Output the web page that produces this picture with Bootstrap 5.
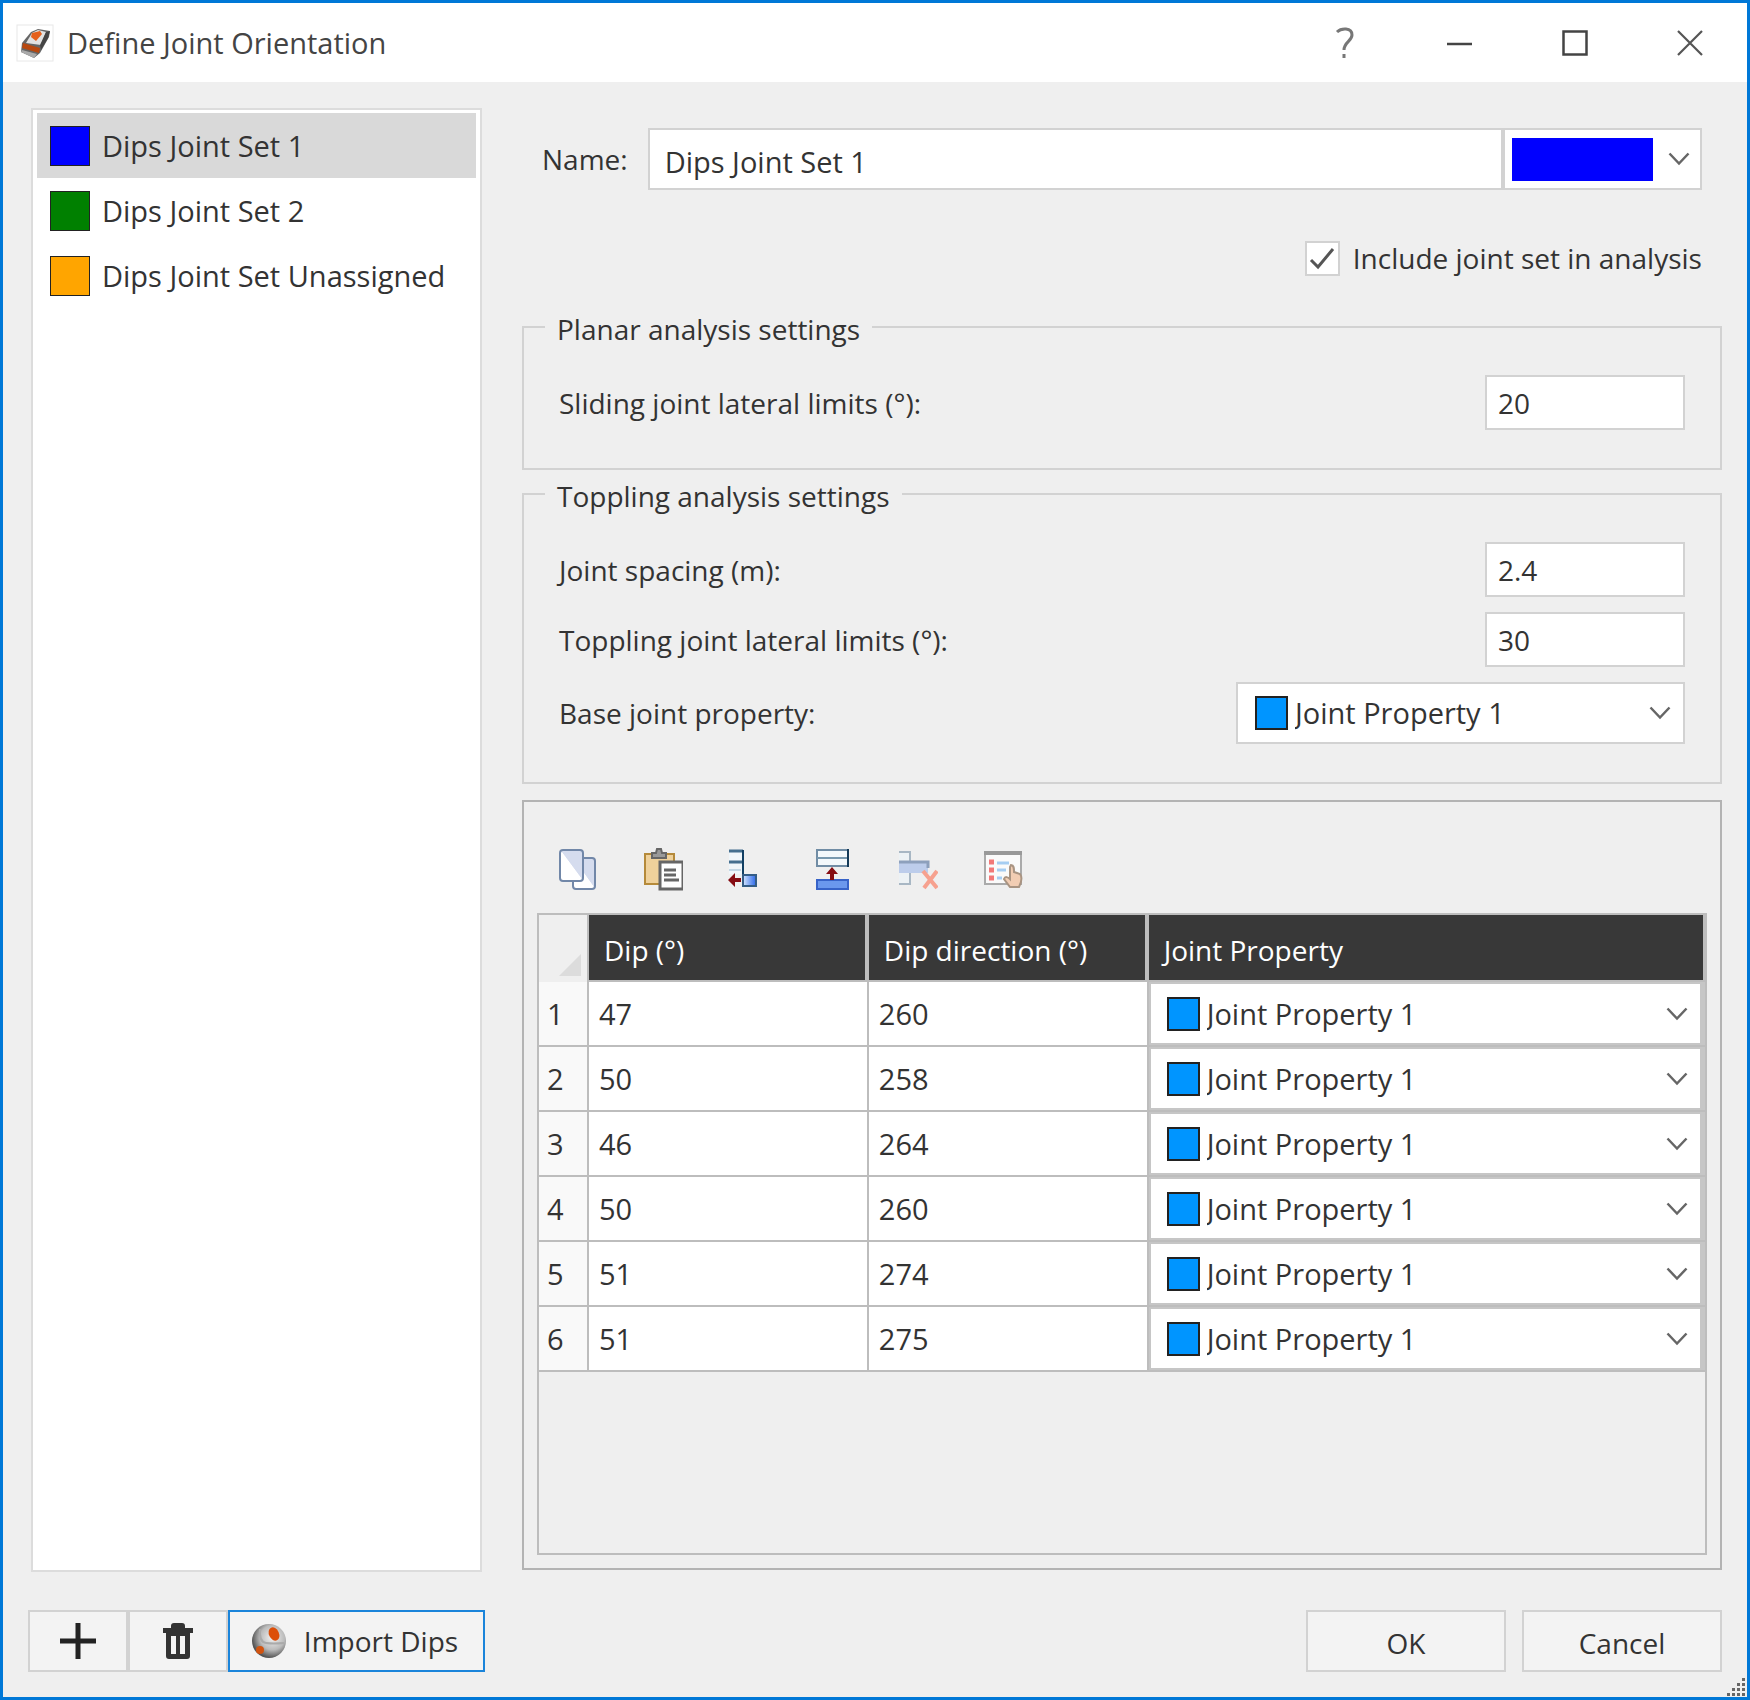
<!DOCTYPE html>
<html lang="en">
<head>
<meta charset="utf-8">
<meta name="viewport" content="width=device-width, initial-scale=1">
<title>Define Joint Orientation</title>
<link href="https://cdn.jsdelivr.net/npm/bootstrap@5.3.0/dist/css/bootstrap.min.css" rel="stylesheet">
<style>
  body { font-family: "Open Sans", "Noto Sans", sans-serif; font-size: 28px; line-height: 40px; color: #333; background: #efefef; }
  .dialog-window { min-height: 100vh; border: 3px solid #0078d7; }
  .title-bar { height: 79px; padding-left: 13px; }
  .title-text { margin-left: 13px; color: #444; font-size: 29px; line-height: 40px; font-weight: 400; }
  .caption-btn { width: 115px; height: 75px; border: 0; background: none; padding: 0; }
  .caption-btn svg, .tool-btn svg { display: block; margin: 0 auto; }
  .dialog-body { padding: 26px 25px 0; gap: 37px; }
  .set-column { flex: 0 0 457px; }
  .set-list { margin: 0 3px; border: 2px solid #dcdcdc; background: #fff; padding: 3px 4px; }
  .set-item { height: 65px; padding: 0 13px; gap: 12px; color: #333; font-size: 29px; border: 0; background: none; text-align: left; }
  .set-item.chosen { background: #d9d9d9; }
  .set-swatch { width: 40px; height: 40px; border: 1px solid #222; flex: none; }
  .swatch-blue { background: #00f; }
  .swatch-green { background: #008000; }
  .swatch-orange { background: #ffa500; }
  .main-column { min-width: 0; padding-bottom: 2px; }
  .name-row { padding: 20px 20px 0; }
  .name-row label { margin-right: 20px; }
  .field-box, .combo-box { border: 2px solid #d2d2d2; background-color: #fff; border-radius: 0; color: #333; font-size: 28px; line-height: 40px; }
  .field-box { height: 55px; width: 200px; padding: 0 11px; }
  .name-box { height: 62px; padding: 4px 15px 0; width: auto; min-width: 0; font-size: 29px; }
  .combo-box { height: 62px; display: flex; align-items: center; }
  .combo-box select { border: 0; border-radius: 0; background-color: transparent; color: #333; font-size: 29px; line-height: 40px; height: 56px; padding: 0 40px 0 7px;
    background-image: url("data:image/svg+xml,%3Csvg xmlns='http://www.w3.org/2000/svg' viewBox='0 0 22 14'%3E%3Cpath d='M1.500 1.500 11 11.500 20.500 1.500' fill='none' stroke='%23666' stroke-width='2.500'/%3E%3C/svg%3E");
    background-size: 22px 14px; background-position: right 12px center; }
  .color-box { width: 199px; padding-left: 7px; }
  .color-box select { background-position: right 10px center; }
  .color-fill { width: 141px; height: 43px; background: #00f; flex: none; }
  .base-box { width: 449px; padding-left: 17px; }
  .prop-swatch { width: 33px; height: 34px; border: 2px solid #222; background: #0095ff; flex: none; }
  .include-row { padding: 48px 20px 0; gap: 13px; }
  .include-row .form-check-input { width: 35px; height: 35px; margin: 0; border: 2px solid #d2d2d2; border-radius: 0; background-color: #fff; float: none; }
  .include-row .form-check-input:checked { background-size: 30px 30px; background-image: url("data:image/svg+xml,%3Csvg xmlns='http://www.w3.org/2000/svg' viewBox='0 0 30 30'%3E%3Cpath d='M4 17 11 24 26 6' fill='none' stroke='%23555' stroke-width='3'/%3E%3C/svg%3E"); }
  .group-frame { border: 2px solid #d2d2d2; padding: 0 35px 38px; margin: 0; }
  .group-frame legend { float: none; width: auto; margin: 0 0 26px -14px; padding: 4px 12px 0; font-size: 28px; line-height: 40px; }
  .group-planar { margin-top: 27px; }
  .group-toppling { margin-top: 2px; }
  .set-rows { gap: 15px; }
  .grid-panel { margin-top: 16px; border: 2px solid #b3b3b3; padding: 45px 13px 13px; }
  .tool-row { padding: 0 21px 20px; gap: 45px; }
  .tool-btn { width: 40px; height: 46px; padding: 0; border: 0; background: none; }
  .grid-frame { border: 2px solid #bdbdbd; }
  .joint-grid { width: 100%; table-layout: fixed; border-collapse: separate; border-spacing: 0; font-size: 29px; }
  .col-num { width: 50px; }
  .col-dip { width: 24%; }
  .joint-grid thead th { height: 67px; background: #383838; color: #fff; font-size: 28px; font-weight: 400; padding: 4px 15px 0; border-right: 4px solid #bdbdbd; border-bottom: 2px solid #bdbdbd; }
  .joint-grid thead th:last-child { border-right-width: 2px; }
  .joint-grid thead th.corner { background: #efefef; border-right-width: 2px; border-bottom: 0; padding: 0 6px 6px 0; vertical-align: bottom; }
  .corner svg { display: block; margin-left: auto; }
  .joint-grid tbody td, .joint-grid tbody th { height: 65px; background: #fff; padding: 0 10px; border-right: 2px solid #bdbdbd; border-bottom: 2px solid #bdbdbd; font-weight: 400; }
  .joint-grid tbody th { background: #f9f9f9; padding: 0 8px; }
  .joint-grid tbody td.prop-cell { padding: 0; border-right: 0; }
  .prop-cell .combo-box { height: 63px; border-color: #c6c6c6; border-right-width: 5px; padding-left: 16px; }
  .foot-row { padding: 38px 25px 25px; gap: 16px; }
  .dlg-btn { height: 62px; width: 200px; border: 2px solid #d2d2d2; border-radius: 0; background: #f3f3f3; color: #333; font-size: 28px; line-height: 40px; padding: 4px 0 0; }
  .icon-btn { width: 100px; padding: 0; }
  .import-btn { width: 257px; border: 2px solid #1a84da; padding: 0 4px 0 0; gap: 17px; }
  .size-grip { position: absolute; right: 1px; bottom: 1px; }
</style>
</head>
<body>
<div class="dialog-window d-flex flex-column position-relative">
  <header class="title-bar d-flex align-items-center bg-white">
    <svg width="38" height="38" viewBox="0 0 38 38" aria-hidden="true"><rect x="1" y="1" width="36" height="36" fill="#fff" stroke="#e8e8e8"/><path d="M5 28 6 19 15 8 22 5 34 7 33 13 24 29 18 34Z" fill="#666"/><path d="M10 19 16 9 22 6 30 8 25 21Z" fill="#e2e2e2"/><path d="M30 8 34 7 32 14 25 26 24 21Z" fill="#444"/><path d="M16 9 24 7 26 10 20 17 15 13Z" fill="#e5601c"/><path d="M7 19 24 24 23 29 6 24Z" fill="#b8480f"/><path d="M6 26 21 30 18 34 5 28Z" fill="#aaa"/></svg>
    <h1 class="title-text mb-0 me-auto">Define Joint Orientation</h1>
    <button class="caption-btn" type="button" aria-label="Help"><svg width="20" height="32" viewBox="0 0 20 32"><path d="M2 5C6 1 17 0 17 8 17 14 9 15 9 23M9 27V31" fill="none" stroke="#777" stroke-width="3"/></svg></button>
    <button class="caption-btn" type="button" aria-label="Minimize"><svg width="26" height="26" viewBox="0 0 26 26"><path d="M0 14H25" stroke="#444" stroke-width="2.500"/></svg></button>
    <button class="caption-btn" type="button" aria-label="Maximize"><svg width="26" height="26" viewBox="0 0 26 26"><rect x="1.500" y="1.500" width="23" height="23" fill="none" stroke="#444" stroke-width="2.500"/></svg></button>
    <button class="caption-btn" type="button" aria-label="Close"><svg width="26" height="26" viewBox="0 0 26 26"><path d="M1 1 25 25M25 1 1 25" stroke="#555" stroke-width="2.200"/></svg></button>
  </header>
  <main class="dialog-body d-flex flex-grow-1">
    <div class="set-column d-flex flex-column">
      <div class="set-list flex-grow-1 d-flex flex-column">
        <button type="button" class="set-item chosen d-flex align-items-center"><span class="set-swatch swatch-blue"></span>Dips Joint Set 1</button>
        <button type="button" class="set-item d-flex align-items-center"><span class="set-swatch swatch-green"></span>Dips Joint Set 2</button>
        <button type="button" class="set-item d-flex align-items-center"><span class="set-swatch swatch-orange"></span>Dips Joint Set Unassigned</button>
      </div>
    </div>
    <div class="main-column flex-grow-1 d-flex flex-column">
      <div class="name-row d-flex align-items-center">
        <label for="setName">Name:</label>
        <input id="setName" type="text" class="field-box name-box flex-grow-1" value="Dips Joint Set 1">
        <div class="combo-box color-box"><span class="color-fill"></span><select class="form-select" aria-label="Colour"><option value="#0000ff"></option></select></div>
      </div>
      <div class="include-row d-flex align-items-center justify-content-end">
        <input id="include" type="checkbox" class="form-check-input" checked><label for="include">Include joint set in analysis</label>
      </div>
      <fieldset class="group-frame group-planar">
        <legend>Planar analysis settings</legend>
        <div class="d-flex justify-content-between align-items-center"><label for="slide">Sliding joint lateral limits (°):</label><input id="slide" class="field-box" type="text" value="20"></div>
      </fieldset>
      <fieldset class="group-frame group-toppling">
        <legend>Toppling analysis settings</legend>
        <div class="d-flex flex-column set-rows">
          <div class="d-flex justify-content-between align-items-center"><label for="spacing">Joint spacing (m):</label><input id="spacing" class="field-box" type="text" value="2.4"></div>
          <div class="d-flex justify-content-between align-items-center"><label for="topple">Toppling joint lateral limits (°):</label><input id="topple" class="field-box" type="text" value="30"></div>
          <div class="d-flex justify-content-between align-items-center"><label for="baseProp">Base joint property:</label><div class="combo-box base-box"><span class="prop-swatch"></span><select id="baseProp" class="form-select"><option>Joint Property 1</option></select></div></div>
        </div>
      </fieldset>
      <section class="grid-panel flex-grow-1 d-flex flex-column">
        <div class="tool-row d-flex">
          <button class="tool-btn" type="button" aria-label="Copy"><svg width="40" height="44" viewBox="0 0 40 44"><defs><linearGradient id="pg" x1="0" y1="1" x2="1" y2="0"><stop offset=".5" stop-color="#fff"/><stop offset=".52" stop-color="#d5dcee"/></linearGradient></defs><rect x="15" y="10" width="22" height="31" rx="3" fill="url(#pg)" stroke="#7187a8" stroke-width="2"/><rect x="2" y="2" width="23" height="31" rx="3" fill="url(#pg)" stroke="#7187a8" stroke-width="2"/></svg></button>
          <button class="tool-btn" type="button" aria-label="Paste"><svg width="40" height="44" viewBox="0 0 40 44"><rect x="2" y="6" width="29" height="30" fill="#efd19b" stroke="#b58a3a" stroke-width="2"/><path d="M9 10V5H13L14 1H18L19 5H23V10Z" fill="#999" stroke="#666" stroke-width="2"/><rect x="17" y="14" width="23" height="27" fill="#fff" stroke="#666" stroke-width="3"/><path d="M21 22H33M21 27H33M21 32H36" stroke="#666" stroke-width="3"/></svg></button>
          <button class="tool-btn" type="button" aria-label="Insert row"><svg width="40" height="44" viewBox="0 0 40 44"><defs><linearGradient id="bl"><stop offset="0" stop-color="#d5e6ff"/><stop offset="1" stop-color="#2c68e8"/></linearGradient></defs><path d="M1 3H15V26H1Z" fill="#f0f6fa"/><path d="M1 3H15M1 14H15" stroke="#456f8f" stroke-width="3"/><path d="M15 2V26" stroke="#123f63" stroke-width="2"/><path d="M1 22H13" stroke="#c3d7e5" stroke-width="2"/><rect x="15" y="27" width="13" height="11" fill="url(#bl)" stroke="#345d86" stroke-width="2"/><path d="M0 32 7 25V30H13V34H7V39Z" fill="#850c12"/></svg></button>
          <button class="tool-btn" type="button" aria-label="Append row"><svg width="40" height="44" viewBox="0 0 40 44"><rect x="4" y="2" width="31" height="16" fill="#f3f8fb" stroke="#718da5" stroke-width="2"/><path d="M4 10H35" stroke="#7898ae" stroke-width="2"/><path d="M35 1V19" stroke="#143a58" stroke-width="2"/><rect x="4" y="32" width="31" height="9" fill="#6b98ed" stroke="#3763c8" stroke-width="2"/><path d="M19 19 25 26H21V32H17V26H13Z" fill="#850c12"/></svg></button>
          <button class="tool-btn" type="button" aria-label="Delete row"><svg width="40" height="44" viewBox="0 0 40 44"><path d="M1 3H12V36H1Z" fill="#edf2f5"/><path d="M1 4H12V36H1" fill="none" stroke="#a8b7c4" stroke-width="2"/><path d="M1 14H30V25H1Z" fill="#bdcdeb"/><path d="M1 14H30V20" fill="none" stroke="#8da0bc" stroke-width="3"/><path d="M25 23 39 40M39 23 26 40" stroke="#f6a18f" stroke-width="4"/></svg></button>
          <button class="tool-btn" type="button" aria-label="Options"><svg width="40" height="44" viewBox="0 0 40 44"><rect x="2" y="4" width="36" height="32" fill="#fafafa" stroke="#aaa" stroke-width="2"/><path d="M1 5H39" stroke="#999" stroke-width="4"/><path d="M6 14H11M6 22H11M6 30H11" stroke="#f27878" stroke-width="5"/><path d="M14 15H26M14 22H23M14 30H19" stroke="#a5cdf2" stroke-width="3"/><path d="M28 17C31 17 31 20 31 24L37 26C40 30 38 35 36 39H27L21 31C22 28 25 29 27 31V19Z" fill="#f2cdb3" stroke="#a99482" stroke-width="2"/></svg></button>
        </div>
        <div class="grid-frame flex-grow-1">
          <table class="joint-grid">
            <colgroup><col class="col-num"><col class="col-dip"><col class="col-dip"><col></colgroup>
            <thead><tr><th class="corner" aria-label="Select all"><svg width="22" height="22" viewBox="0 0 22 22"><path d="M22 0V22H0Z" fill="#dcdcdc"/></svg></th><th scope="col">Dip (°)</th><th scope="col">Dip direction (°)</th><th scope="col">Joint Property</th></tr></thead>
            <tbody>
              <tr><th scope="row">1</th><td>47</td><td>260</td><td class="prop-cell"><div class="combo-box"><span class="prop-swatch"></span><select class="form-select" aria-label="Joint property, row 1"><option>Joint Property 1</option></select></div></td></tr>
              <tr><th scope="row">2</th><td>50</td><td>258</td><td class="prop-cell"><div class="combo-box"><span class="prop-swatch"></span><select class="form-select" aria-label="Joint property, row 2"><option>Joint Property 1</option></select></div></td></tr>
              <tr><th scope="row">3</th><td>46</td><td>264</td><td class="prop-cell"><div class="combo-box"><span class="prop-swatch"></span><select class="form-select" aria-label="Joint property, row 3"><option>Joint Property 1</option></select></div></td></tr>
              <tr><th scope="row">4</th><td>50</td><td>260</td><td class="prop-cell"><div class="combo-box"><span class="prop-swatch"></span><select class="form-select" aria-label="Joint property, row 4"><option>Joint Property 1</option></select></div></td></tr>
              <tr><th scope="row">5</th><td>51</td><td>274</td><td class="prop-cell"><div class="combo-box"><span class="prop-swatch"></span><select class="form-select" aria-label="Joint property, row 5"><option>Joint Property 1</option></select></div></td></tr>
              <tr><th scope="row">6</th><td>51</td><td>275</td><td class="prop-cell"><div class="combo-box"><span class="prop-swatch"></span><select class="form-select" aria-label="Joint property, row 6"><option>Joint Property 1</option></select></div></td></tr>
            </tbody>
          </table>
        </div>
      </section>
    </div>
  </main>
  <footer class="foot-row d-flex">
    <div class="d-flex me-auto">
      <button class="dlg-btn icon-btn d-flex align-items-center justify-content-center" type="button" aria-label="Add"><svg width="36" height="36" viewBox="0 0 36 36"><path d="M0 18H36M18 0V36" stroke="#222" stroke-width="5"/></svg></button>
      <button class="dlg-btn icon-btn d-flex align-items-center justify-content-center" type="button" aria-label="Delete"><svg width="30" height="36" viewBox="0 0 30 36"><path d="M0 5H8V3Q8 0 11 0H19Q22 0 22 3V5H30V10H27V33Q27 36 24 36H6Q3 36 3 33V10H0Z" fill="#333"/><path d="M8 13H13V31H8ZM17 13H22V31H17Z" fill="#f3f3f3"/></svg></button>
      <button class="dlg-btn import-btn d-flex align-items-center justify-content-center" type="button"><svg width="36" height="36" viewBox="0 0 36 36" aria-hidden="true"><defs><radialGradient id="ball" cx=".6" cy=".4" r=".6"><stop offset="0" stop-color="#f2f2f2"/><stop offset=".6" stop-color="#bbb"/><stop offset="1" stop-color="#555"/></radialGradient></defs><circle cx="18" cy="18" r="17" fill="url(#ball)"/><path d="M9 6Q8 19 15 20T33 20" fill="none" stroke="#aaa" stroke-width="2"/><ellipse cx="23" cy="11" rx="5" ry="7" transform="rotate(-25 23 11)" fill="#dc4e08"/><circle cx="9" cy="27" r="4" fill="#d2530f"/></svg>Import Dips</button>
    </div>
    <button class="dlg-btn" type="button">OK</button>
    <button class="dlg-btn" type="button">Cancel</button>
  </footer>
  <svg class="size-grip" width="20" height="20" viewBox="0 0 20 20" aria-hidden="true"><path d="M16 2h3v3h-3zM11 7h3v3h-3zM16 7h3v3h-3zM6 12h3v3h-3zM11 12h3v3h-3zM16 12h3v3h-3zM1 17h3v3h-3zM6 17h3v3h-3zM11 17h3v3h-3zM16 17h3v3h-3z" fill="#666"/></svg>
</div>
<script src="https://cdn.jsdelivr.net/npm/bootstrap@5.3.0/dist/js/bootstrap.bundle.min.js"></script>
</body>
</html>
